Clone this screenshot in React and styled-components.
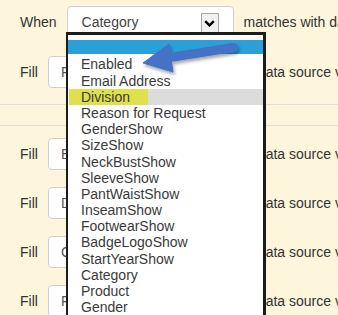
import React from 'react';
import styled, { createGlobalStyle } from 'styled-components';

const GlobalStyle = createGlobalStyle`
    html, body {
        margin: 0;
        height: 100%;
        overflow: hidden;
        background: #fdf6dc;
    }
    body {
        font-family: "Liberation Sans", Arial, sans-serif;
        font-size: 14px;
        color: #333;
    }
`;

const options = [
    'Enabled',
    'Email Address',
    'Division',
    'Reason for Request',
    'GenderShow',
    'SizeShow',
    'NeckBustShow',
    'SleeveShow',
    'PantWaistShow',
    'InseamShow',
    'FootwearShow',
    'BadgeLogoShow',
    'StartYearShow',
    'Category',
    'Product',
    'Gender',
    'Size',
];

const fills = ['Email', 'Department', 'Company', 'First Name'];

const App = () => {
    return (
        <StyledPage>
            <GlobalStyle />
            <StyledSection>
                <StyledRow>
                    <StyledLabel>When</StyledLabel>
                    <StyledSelect>
                        <span>Category</span>
                        <StyledCaret>
                            <svg width="11" height="7" viewBox="0 0 11 7">
                                <polyline points="1.2,1.2 5.5,5.4 9.8,1.2" fill="none" stroke="#000" strokeWidth="2.4" />
                            </svg>
                        </StyledCaret>
                    </StyledSelect>
                    <StyledTail>matches with data source value</StyledTail>
                </StyledRow>
                <StyledRow>
                    <StyledLabel>Fill</StyledLabel>
                    <StyledField>First Name</StyledField>
                    <StyledTail>data source value</StyledTail>
                </StyledRow>
            </StyledSection>
            <StyledGap />
            <StyledSection $top>
                {fills.map((f) => (
                    <StyledRow key={f}>
                        <StyledLabel>Fill</StyledLabel>
                        <StyledField>{f}</StyledField>
                        <StyledTail>data source value</StyledTail>
                    </StyledRow>
                ))}
            </StyledSection>

            <StyledList>
                <StyledBlank />
                {options.map((o) => (
                    <StyledOption key={o} $marked={o === 'Division'}>{o}</StyledOption>
                ))}
            </StyledList>

            <StyledPointer width="115" height="48" viewBox="0 0 115 48">
                <defs>
                    <filter id="shade" x="-20%" y="-30%" width="140%" height="170%">
                        <feDropShadow dx="1.5" dy="2.5" stdDeviation="1.8" floodColor="#000" floodOpacity="0.35" />
                    </filter>
                </defs>
                <g filter="url(#shade)" fill="#4472c4" stroke="#4472c4">
                    <line x1="40" y1="22.5" x2="103.5" y2="12.5" strokeWidth="9" strokeLinecap="round" />
                    <polygon points="13,28 39,9 43,37" strokeWidth="1" strokeLinejoin="round" />
                </g>
            </StyledPointer>
        </StyledPage>
    );
};

const StyledPage = styled.div`
    position: relative;
    min-height: 100vh;
    white-space: nowrap;
`;

const StyledSection = styled.div`
    display: flex;
    flex-direction: column;
    gap: ${(p) => (p.$top ? '17px' : '18px')};
    padding: ${(p) => (p.$top ? '12px 0 0' : '6px 0 16px')};
    border-top: ${(p) => (p.$top ? '1px solid #dfdde2' : 'none')};
    border-bottom: ${(p) => (p.$top ? 'none' : '1px solid #dfdde2')};
`;

const StyledGap = styled.div`
    height: 20px;
`;

const StyledRow = styled.div`
    display: flex;
    align-items: center;
    height: 32px;
    padding-left: 20px;
    & > * {
        flex: none;
    }
`;

const StyledLabel = styled.span`
    margin-right: 10px;
`;

const StyledSelect = styled.div`
    box-sizing: border-box;
    display: flex;
    justify-content: space-between;
    align-items: flex-start;
    width: 167px;
    height: 32px;
    padding: 0 14px 0 14px;
    background: #fff;
    border: 1px solid #cfcfcf;
    border-radius: 4px;
    line-height: 30px;
    color: #444;
`;

const StyledCaret = styled.div`
    box-sizing: border-box;
    display: flex;
    align-items: center;
    justify-content: center;
    width: 18px;
    height: 20px;
    margin-top: 6px;
    background: #f1f1f1;
    border: 1px solid #a8a8a8;
`;

const StyledField = styled.div`
    box-sizing: border-box;
    width: 200px;
    height: 32px;
    padding: 0 12px;
    background: #fff;
    border: 1px solid #cfcfcf;
    border-radius: 4px;
    line-height: 30px;
    color: #555;
`;

const StyledTail = styled.span`
    margin-left: 10px;
`;

// open dropdown lying over the form
const StyledList = styled.div`
    position: absolute;
    left: 66px;
    top: 32px;
    width: 195px;
    height: 320px;
    padding-top: 5px;
    background: #fff;
    border: 3px solid #1c1c1c;
    border-left-width: 2px;
`;

const StyledBlank = styled.div`
    height: 14px;
    margin-bottom: 2.4px;
    background: #2a9fd8;
`;

const StyledOption = styled.div`
    height: 16.2px;
    line-height: 16.2px;
    padding-left: 13px;
    color: #3a3a3a;
    background: ${(p) => (p.$marked ? 'linear-gradient(to right, #fff 0 1px, #e0e04c 1px 80px, #dcdcdc 80px)' : 'transparent')};
`;

const StyledPointer = styled.svg`
    position: absolute;
    left: 130px;
    top: 35px;
    overflow: visible;
    pointer-events: none;
`;

export default App;
